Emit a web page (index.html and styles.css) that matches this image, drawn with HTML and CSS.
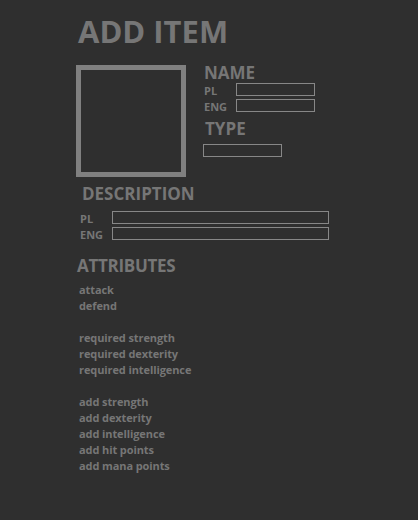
FILE: index.html
```html
<!DOCTYPE html>
<html>
<head>
<meta charset="utf-8">
<link rel="stylesheet" href="styles.css">
</head>
<body>
<div class="page">
  <h1 class="title">ADD ITEM</h1>
  <div class="top">
    <div class="image-box"></div>
    <div class="fields">
      <h2 class="heading">NAME</h2>
      <div class="row"><span class="label">PL</span><span class="input name-input"></span></div>
      <div class="row"><span class="label">ENG</span><span class="input name-input"></span></div>
      <h2 class="heading type-heading">TYPE</h2>
      <span class="input type-input"></span>
    </div>
  </div>
  <h2 class="heading desc-heading">DESCRIPTION</h2>
  <div class="desc">
    <div class="row"><span class="label">PL</span><span class="input desc-input"></span></div>
    <div class="row"><span class="label">ENG</span><span class="input desc-input"></span></div>
  </div>
  <h2 class="heading attr-heading">ATTRIBUTES</h2>
  <ul class="attrs">
    <li>attack</li>
    <li>defend</li>
    <li class="gap"></li>
    <li>required strength</li>
    <li>required dexterity</li>
    <li>required intelligence</li>
    <li class="gap"></li>
    <li>add strength</li>
    <li>add dexterity</li>
    <li>add intelligence</li>
    <li>add hit points</li>
    <li>add mana points</li>
  </ul>
</div>
</body>
</html>
```

FILE: styles.css
```css
html, body {
  margin: 0;
  background: #2f2f2f;
}
body {
  font-family: "Open Sans", "Noto Sans", sans-serif;
  font-weight: 700;
  color: #767676;
  width: 418px;
  height: 520px;
}
.page {
  padding-left: 76px;
  padding-top: 11px;
}
.title {
  margin: 0 0 0 2px;
  font-size: 31px;
  line-height: 40px;
  font-weight: 700;
}
.top {
  display: flex;
  margin-top: 14px;
}
.image-box {
  width: 100px;
  height: 102px;
  border: 5px solid #808080;
}
.fields {
  margin-left: 18px;
  display: flex;
  flex-direction: column;
  align-items: flex-start;
}
.heading {
  margin: 0;
  font-size: 17px;
  line-height: 16px;
  font-weight: 700;
}
.row {
  display: flex;
  align-items: flex-start;
  height: 16px;
}
.row:first-of-type { margin-top: 1px; }
.label {
  font-size: 11px;
  line-height: 14px;
  margin-top: 2px;
  width: 32px;
}
.input {
  display: block;
  box-sizing: border-box;
  height: 13px;
  margin-top: 1px;
  border: 1px solid #878787;
}
.name-input { width: 79px; }
.type-heading { margin-top: 7px; margin-left: 1px; }
.type-input { width: 79px; margin-top: 7px; margin-left: -1px; }
.desc-heading { margin-top: 9px; margin-left: 6px; }
.desc {
  margin-top: 8px;
  margin-left: 4px;
}
.desc-input { width: 217px; }
.attr-heading { margin-top: 16px; margin-left: 1px; letter-spacing: -0.3px; }
.attrs {
  list-style: none;
  margin: 8px 0 0 3px;
  padding: 0;
  font-size: 11px;
  line-height: 16px;
  letter-spacing: -0.1px;
}
.gap { height: 16px; }
```
